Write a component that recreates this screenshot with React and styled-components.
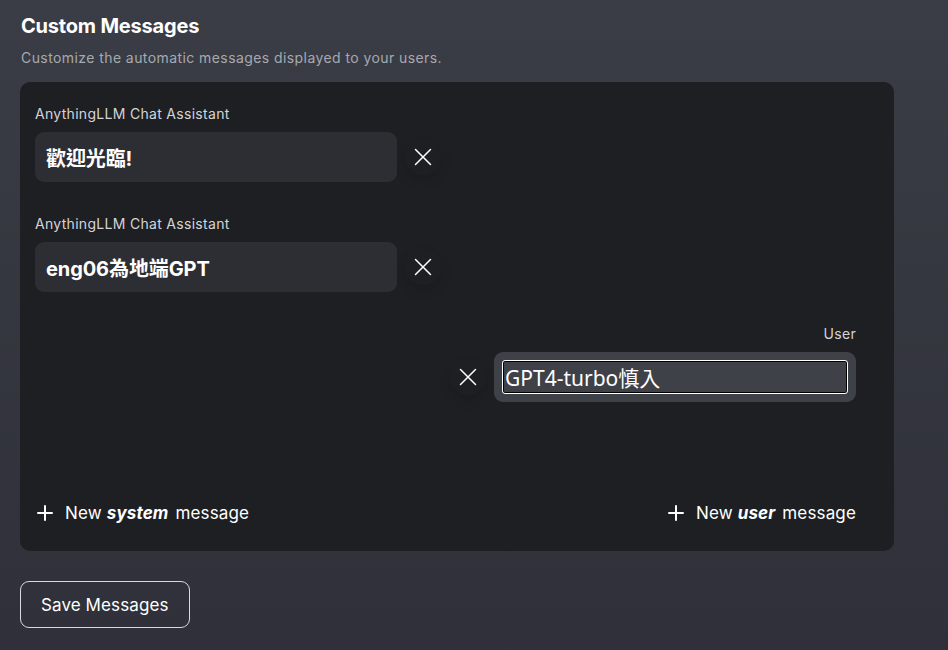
import React from 'react';
import styled, { createGlobalStyle } from 'styled-components';

const GlobalStyle = createGlobalStyle`
  html, body {
    margin: 0;
    padding: 0;
    height: 100%;
  }
  body {
    background: linear-gradient(180deg, #3a3d45 0%, #2f3039 100%);
    font-family: Inter, "Noto Sans CJK TC", sans-serif;
    color: #fff;
  }
  #root {
    min-height: 650px;
  }
`;

const Page = styled.div`
  padding: 11px 54px 20px 20px;
`;

const Title = styled.h2`
  margin: 0 0 0 1px;
  font-size: 20px;
  line-height: 30px;
  font-weight: 700;
  letter-spacing: -0.2px;
`;

const Subtitle = styled.p`
  margin: 7px 0 0 1px;
  font-size: 14px;
  line-height: 20px;
  color: #a6a9b0;
  letter-spacing: 0.42px;
`;

const Panel = styled.div`
  margin-top: 14px;
  background: #1e1f23;
  border-radius: 10px;
  padding: 22px 38px 26px 15px;
  display: flex;
  flex-direction: column;
`;

const MessageList = styled.div`
  display: flex;
  flex-direction: column;
  gap: 32px;
`;

const Message = styled.div`
  display: flex;
  flex-direction: column;
  align-items: ${(p) => (p.$user ? 'flex-end' : 'flex-start')};
`;

const Sender = styled.div`
  font-size: 14px;
  line-height: 20px;
  color: #d4d5d8;
  margin-bottom: 8px;
  letter-spacing: 0.3px;
`;

const Row = styled.div`
  display: flex;
  align-items: center;
  gap: 8px;
  flex-direction: ${(p) => (p.$user ? 'row-reverse' : 'row')};
`;

const Bubble = styled.div`
  width: 362px;
  height: 50px;
  box-sizing: border-box;
  border-radius: 9px;
  background: ${(p) => (p.$user ? '#3f4149' : '#2d2e33')};
  display: flex;
  align-items: center;
  padding: ${(p) => (p.$user ? '8px' : '0 11px')};
`;

const SystemText = styled.span`
  font-size: 20px;
  font-weight: 700;
  color: #fff;
  letter-spacing: -0.1px;
`;

const UserInput = styled.div`
  flex: 1;
  height: 100%;
  box-sizing: border-box;
  border: 1px solid #fff;
  box-shadow: inset 0 0 0 1px #000;
  border-radius: 3px;
  display: flex;
  align-items: center;
  padding: 0 2px;
  font-family: "Noto Sans", "Noto Sans CJK TC", sans-serif;
  font-size: 21px;
  color: #fff;
`;

const RemoveButton = styled.button`
  width: 36px;
  height: 36px;
  border: none;
  border-radius: 50%;
  background: transparent;
  box-shadow: 0 6px 12px rgba(0, 0, 0, 0.12);
  display: flex;
  align-items: center;
  justify-content: center;
  padding: 0;
  color: #fff;
  cursor: pointer;
`;

const Footer = styled.div`
  margin-top: 99px;
  display: flex;
  justify-content: space-between;
  align-items: center;
`;

const AddButton = styled.button`
  display: flex;
  align-items: center;
  gap: 12px;
  background: none;
  border: none;
  padding: 0 0 0 2px;
  color: #fff;
  font-family: Inter, sans-serif;
  font-size: 17px;
  line-height: 24px;
  cursor: pointer;
  letter-spacing: 0.15px;

  b {
    font-weight: 700;
    font-style: italic;
    margin-right: 7px;
  }
`;

const SaveButton = styled.button`
  margin-top: 30px;
  height: 47px;
  padding: 0 20px;
  border: 1px solid #d8d9dc;
  border-radius: 9px;
  background: transparent;
  color: #fff;
  font-family: Inter, sans-serif;
  font-size: 17px;
  letter-spacing: 0.1px;
  cursor: pointer;
`;

const XIcon = () => (
  <svg width="18" height="18" viewBox="0 0 18 18" fill="none" stroke="currentColor" strokeWidth="1.5" strokeLinecap="round">
    <path d="M1.5 1.5l15 15M16.5 1.5l-15 15" />
  </svg>
);

const PlusIcon = () => (
  <svg width="16" height="16" viewBox="0 0 16 16" fill="none" stroke="currentColor" strokeWidth="2" strokeLinecap="round">
    <path d="M8 1v14M1 8h14" />
  </svg>
);

const messages = [
  { role: 'system', text: '歡迎光臨!' },
  { role: 'system', text: 'eng06為地端GPT' },
  { role: 'user', text: 'GPT4-turbo慎入' },
];

export default function App() {
  return (
    <>
      <GlobalStyle />
      <Page>
        <Title>Custom Messages</Title>
        <Subtitle>Customize the automatic messages displayed to your users.</Subtitle>
        <Panel>
          <MessageList>
            {messages.map((m, i) => {
              const user = m.role === 'user';
              return (
                <Message key={i} $user={user}>
                  <Sender>{user ? 'User' : 'AnythingLLM Chat Assistant'}</Sender>
                  <Row $user={user}>
                    <Bubble $user={user}>
                      {user ? <UserInput>{m.text}</UserInput> : <SystemText>{m.text}</SystemText>}
                    </Bubble>
                    <RemoveButton>
                      <XIcon />
                    </RemoveButton>
                  </Row>
                </Message>
              );
            })}
          </MessageList>
          <Footer>
            <AddButton>
              <PlusIcon />
              <span>New <b>system</b>message</span>
            </AddButton>
            <AddButton>
              <PlusIcon />
              <span>New <b>user</b>message</span>
            </AddButton>
          </Footer>
        </Panel>
        <SaveButton>Save Messages</SaveButton>
      </Page>
    </>
  );
}
